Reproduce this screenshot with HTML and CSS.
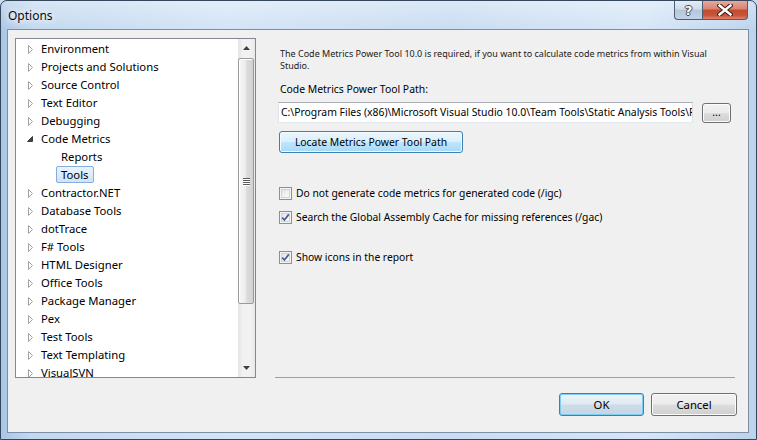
FILE: index.html
```html
<!DOCTYPE html>
<html>
<head>
<meta charset="utf-8">
<title>Options</title>
<link rel="stylesheet" href="styles.css">
</head>
<body>
<div class="window">
  <div class="titlebar">
    <span class="title">Options</span>
    <div class="caption-btns">
      <div class="cbtn help">?</div>
      <div class="cbtn close">
        <svg width="16" height="12" viewBox="0 0 16 12">
          <path d="M2.5 1.5 L13.5 10.5 M13.5 1.5 L2.5 10.5" stroke="#3a1a14" stroke-width="4.4" stroke-linecap="square" fill="none"/>
          <path d="M2.5 1.5 L13.5 10.5 M13.5 1.5 L2.5 10.5" stroke="#ffffff" stroke-width="2.4" stroke-linecap="square" fill="none"/>
        </svg>
      </div>
    </div>
  </div>
  <div class="client">
    <div class="main">
      <div class="tree">
        <ul class="nodes">
          <li class="node"><span class="twisty"><svg width="6" height="9"><path d="M0.5 0.5 L4.5 4.5 L0.5 8.5 Z" fill="#fff" stroke="#a3a3a3"/></svg></span><span class="label">Environment</span></li>
          <li class="node"><span class="twisty"><svg width="6" height="9"><path d="M0.5 0.5 L4.5 4.5 L0.5 8.5 Z" fill="#fff" stroke="#a3a3a3"/></svg></span><span class="label">Projects and Solutions</span></li>
          <li class="node"><span class="twisty"><svg width="6" height="9"><path d="M0.5 0.5 L4.5 4.5 L0.5 8.5 Z" fill="#fff" stroke="#a3a3a3"/></svg></span><span class="label">Source Control</span></li>
          <li class="node"><span class="twisty"><svg width="6" height="9"><path d="M0.5 0.5 L4.5 4.5 L0.5 8.5 Z" fill="#fff" stroke="#a3a3a3"/></svg></span><span class="label">Text Editor</span></li>
          <li class="node"><span class="twisty"><svg width="6" height="9"><path d="M0.5 0.5 L4.5 4.5 L0.5 8.5 Z" fill="#fff" stroke="#a3a3a3"/></svg></span><span class="label">Debugging</span></li>
          <li class="node"><span class="twisty open"><svg width="6" height="6"><path d="M5.5 0.5 L5.5 5.5 L0.5 5.5 Z" fill="#404040" stroke="#404040"/></svg></span><span class="label">Code Metrics</span></li>
          <li class="node child"><span class="label">Reports</span></li>
          <li class="node child"><span class="label selected">Tools</span></li>
          <li class="node"><span class="twisty"><svg width="6" height="9"><path d="M0.5 0.5 L4.5 4.5 L0.5 8.5 Z" fill="#fff" stroke="#a3a3a3"/></svg></span><span class="label">Contractor.NET</span></li>
          <li class="node"><span class="twisty"><svg width="6" height="9"><path d="M0.5 0.5 L4.5 4.5 L0.5 8.5 Z" fill="#fff" stroke="#a3a3a3"/></svg></span><span class="label">Database Tools</span></li>
          <li class="node"><span class="twisty"><svg width="6" height="9"><path d="M0.5 0.5 L4.5 4.5 L0.5 8.5 Z" fill="#fff" stroke="#a3a3a3"/></svg></span><span class="label">dotTrace</span></li>
          <li class="node"><span class="twisty"><svg width="6" height="9"><path d="M0.5 0.5 L4.5 4.5 L0.5 8.5 Z" fill="#fff" stroke="#a3a3a3"/></svg></span><span class="label">F# Tools</span></li>
          <li class="node"><span class="twisty"><svg width="6" height="9"><path d="M0.5 0.5 L4.5 4.5 L0.5 8.5 Z" fill="#fff" stroke="#a3a3a3"/></svg></span><span class="label">HTML Designer</span></li>
          <li class="node"><span class="twisty"><svg width="6" height="9"><path d="M0.5 0.5 L4.5 4.5 L0.5 8.5 Z" fill="#fff" stroke="#a3a3a3"/></svg></span><span class="label">Office Tools</span></li>
          <li class="node"><span class="twisty"><svg width="6" height="9"><path d="M0.5 0.5 L4.5 4.5 L0.5 8.5 Z" fill="#fff" stroke="#a3a3a3"/></svg></span><span class="label">Package Manager</span></li>
          <li class="node"><span class="twisty"><svg width="6" height="9"><path d="M0.5 0.5 L4.5 4.5 L0.5 8.5 Z" fill="#fff" stroke="#a3a3a3"/></svg></span><span class="label">Pex</span></li>
          <li class="node"><span class="twisty"><svg width="6" height="9"><path d="M0.5 0.5 L4.5 4.5 L0.5 8.5 Z" fill="#fff" stroke="#a3a3a3"/></svg></span><span class="label">Test Tools</span></li>
          <li class="node"><span class="twisty"><svg width="6" height="9"><path d="M0.5 0.5 L4.5 4.5 L0.5 8.5 Z" fill="#fff" stroke="#a3a3a3"/></svg></span><span class="label">Text Templating</span></li>
          <li class="node"><span class="twisty"><svg width="6" height="9"><path d="M0.5 0.5 L4.5 4.5 L0.5 8.5 Z" fill="#fff" stroke="#a3a3a3"/></svg></span><span class="label">VisualSVN</span></li>
        </ul>
        <div class="vscroll">
          <div class="arrow up"><svg width="7" height="4"><path d="M3.5 0 L7 4 L0 4 Z" fill="#404040"/></svg></div>
          <div class="track">
            <div class="thumb"><div class="grip"><i></i><i></i><i></i><i></i></div></div>
          </div>
          <div class="arrow down"><svg width="7" height="4"><path d="M0 0 L7 0 L3.5 4 Z" fill="#404040"/></svg></div>
        </div>
      </div>
      <div class="panel">
        <p class="desc">The Code Metrics Power Tool 10.0 is required, if you want to calculate code metrics from within Visual<br>Studio.</p>
        <p class="field-label">Code Metrics Power Tool Path:</p>
        <div class="path-row">
          <div class="textbox">C:\Program Files (x86)\Microsoft Visual Studio 10.0\Team Tools\Static Analysis Tools\FxCop\Metrics.exe</div>
          <div class="btn browse">...</div>
        </div>
        <div class="btn locate">Locate Metrics Power Tool Path</div>
        <div class="check first"><span class="cb"></span><span>Do not generate code metrics for generated code (/igc)</span></div>
        <div class="check second"><span class="cb"><svg width="11" height="11" viewBox="0 0 11 11"><path d="M2.2 5.6 L4.4 8 L8.8 2.4" stroke="#4a5e8c" stroke-width="1.7" fill="none"/></svg></span><span>Search the Global Assembly Cache for missing references (/gac)</span></div>
        <div class="check third"><span class="cb"><svg width="11" height="11" viewBox="0 0 11 11"><path d="M2.2 5.6 L4.4 8 L8.8 2.4" stroke="#4a5e8c" stroke-width="1.7" fill="none"/></svg></span><span>Show icons in the report</span></div>
      </div>
    </div>
    <div class="footer">
      <div class="btn dialog default">OK</div>
      <div class="btn dialog">Cancel</div>
    </div>
  </div>
</div>
</body>
</html>
```
FILE: styles.css
```css
* { box-sizing: border-box; }
html, body { margin: 0; padding: 0; }
body {
  width: 757px;
  height: 440px;
  overflow: hidden;
  font-family: "Noto Sans", "Open Sans", sans-serif;
  font-size: 11.3px;
  color: #000;
  background: #c9dcf0;
}
.window {
  width: 757px;
  height: 440px;
  border: 1px solid #34475c;
  border-radius: 7px 7px 0 0;
  padding: 0 7px 6px 6px;
  display: flex;
  flex-direction: column;
  background:
    linear-gradient(180deg, rgba(255,255,255,0.35) 0%, rgba(255,255,255,0) 30px),
    linear-gradient(90deg, #aac6e6 0%, #c2d8ef 4%, #d3e4f6 30%, #c9dcf1 60%, #d6e6f7 85%, #bcd3ec 100%);
}
.titlebar {
  height: 28px;
  display: flex;
  align-items: flex-start;
  flex: none;
}
.title {
  margin-top: 6px;
  margin-left: 1px;
  font-size: 12px;
  color: #0b0b0b;
  text-shadow: 0 0 6px #fff, 0 0 10px #fff;
}
.caption-btns {
  margin-left: auto;
  margin-right: 1px;
  display: flex;
  height: 19px;
}
.cbtn {
  height: 19px;
  border: 1px solid #4f5f73;
  border-top: none;
  display: flex;
  align-items: center;
  justify-content: center;
}
.help {
  width: 28px;
  border-right: none;
  border-radius: 0 0 0 4px;
  background: linear-gradient(180deg, #e4ecf6 0%, #cfdbe9 45%, #b6c7db 50%, #c3d2e3 100%);
  color: #fff;
  font-family: "DejaVu Sans", sans-serif;
  font-weight: bold;
  font-size: 13px;
  text-shadow: 1px 0 0 #3c4a5a, -1px 0 0 #3c4a5a, 0 1px 0 #3c4a5a, 0 -1px 0 #3c4a5a;
}
.close {
  width: 46px;
  border-radius: 0 0 4px 0;
  background: linear-gradient(180deg, #e9a99a 0%, #d8826f 45%, #c24a31 50%, #c9553b 80%, #e0836a 100%);
}
.client {
  width: 742px;
  height: 404px;
  border: 1px solid #7c8fa6;
  background: #f0f0f0;
  padding: 8px 0 0 7px;
  display: flex;
  flex-direction: column;
}
.main {
  display: flex;
  height: 340px;
  flex: none;
}
.tree {
  width: 241px;
  height: 340px;
  border: 1px solid #828790;
  background: #fff;
  display: flex;
  overflow: hidden;
}
.nodes {
  list-style: none;
  margin: 0;
  padding: 0;
  flex: 1;
  overflow: hidden;
}
.node {
  height: 18px;
  display: flex;
  align-items: center;
  padding-left: 11px;
}
.node.child { padding-left: 40px; }
.twisty {
  width: 9px;
  height: 18px;
  display: flex;
  align-items: center;
  padding-top: 2px;
}
.twisty svg { margin-left: 1px; display: block; }
.twisty.open svg { margin-left: 0; }
.label {
  height: 17px;
  line-height: 15px;
  padding: 0 4px;
  border: 1px solid transparent;
  border-radius: 2px;
  white-space: nowrap;
  margin-top: 1px;
}
.label.selected {
  border-color: #84acdd;
  background: linear-gradient(180deg, #eaf3fd 0%, #cfe3fc 100%);
}
.vscroll {
  width: 17px;
  flex: none;
  display: flex;
  flex-direction: column;
  background: linear-gradient(90deg, #e4e4e4 0%, #f2f2f2 30%, #f2f2f2 70%, #e9e9e9 100%);
}
.arrow {
  height: 18px;
  display: flex;
  align-items: center;
  justify-content: center;
  flex: none;
}
.arrow svg { display: block; }
.track {
  flex: 1;
  padding-top: 1px;
}
.thumb {
  margin-left: 0;
  width: 16px;
  height: 246px;
  border: 1px solid #9a9a9a;
  border-radius: 2px;
  background: linear-gradient(90deg, #f6f6f6 0%, #ececec 45%, #dcdcdc 55%, #d2d2d2 100%);
  box-shadow: inset 1px 1px 0 #fff;
  display: flex;
  align-items: center;
  justify-content: center;
}
.grip {
  width: 7px;
  display: flex;
  flex-direction: column;
  gap: 1px;
}
.grip i {
  display: block;
  height: 1px;
  background: #5b5b5b;
  box-shadow: 0 1px 0 #fff;
}
.panel {
  width: 460px;
  margin-left: 19px;
  height: 340px;
  border-bottom: 1px solid #a0a0a0;
  padding-left: 4px;
  display: flex;
  flex-direction: column;
  align-items: flex-start;
  font-size: 10.4px;
}
.desc {
  margin: 10px 0 0 1px;
  font-size: 9px;
  line-height: 12px;
  color: #1a1a1a;
}
.field-label {
  margin: 10px 0 0 1px;
  line-height: 15px;
}
.path-row {
  display: flex;
  align-items: flex-start;
  margin-top: 5px;
  margin-left: -1px;
}
.textbox {
  width: 415px;
  height: 21px;
  border: 1px solid #abadb3;
  border-color: #abadb3 #dbdfe6 #e3e9ef #e2e3ea;
  background: #fff;
  padding: 0 2px;
  line-height: 19px;
  white-space: nowrap;
  overflow: hidden;
}
.btn {
  border: 1px solid #707070;
  border-radius: 3px;
  background: linear-gradient(180deg, #f2f2f2 0%, #ebebeb 49%, #dddddd 51%, #cfcfcf 100%);
  box-shadow: inset 0 0 0 1px #fbfbfb;
  display: flex;
  align-items: center;
  justify-content: center;
  white-space: nowrap;
}
.browse {
  width: 29px;
  height: 20px;
  margin-left: 9px;
  margin-top: 1px;
  padding-bottom: 2px;
}
.locate {
  width: 184px;
  height: 22px;
  margin-top: 8px;
  border-color: #3c7fb1;
  background: linear-gradient(180deg, #eaf6fd 0%, #d9f0fc 49%, #bee6fd 51%, #a7d9f5 100%);
  box-shadow: inset 0 0 0 1px #f4fbff;
}
.check {
  display: flex;
  align-items: center;
  gap: 4px;
  height: 16px;
  font-size: 10.3px;
}
.check.first { margin-top: 32px; }
.check.second { margin-top: 8px; }
.check.third { margin-top: 24px; }
.cb {
  width: 13px;
  height: 13px;
  border: 1px solid #8e8f8f;
  background: linear-gradient(135deg, #dcdcdc 0%, #f4f4f4 60%, #ffffff 100%);
  box-shadow: inset 0 0 0 1px #f4f4f4, inset 0 0 0 2px #d0d3d8;
  display: flex;
  align-items: center;
  justify-content: center;
  flex: none;
}
.cb svg { display: block; }
.footer {
  display: flex;
  justify-content: flex-end;
  gap: 7px;
  margin-top: 15px;
  padding-right: 11px;
}
.dialog {
  width: 86px;
  height: 23px;
}
.dialog.default {
  width: 85px;
  border-color: #3c7fb1;
  background: linear-gradient(180deg, #eef4f9 0%, #dfe9f1 49%, #cddce8 51%, #c4d6e4 100%);
  box-shadow: inset 0 0 0 1px #7fcdf0;
}
```
